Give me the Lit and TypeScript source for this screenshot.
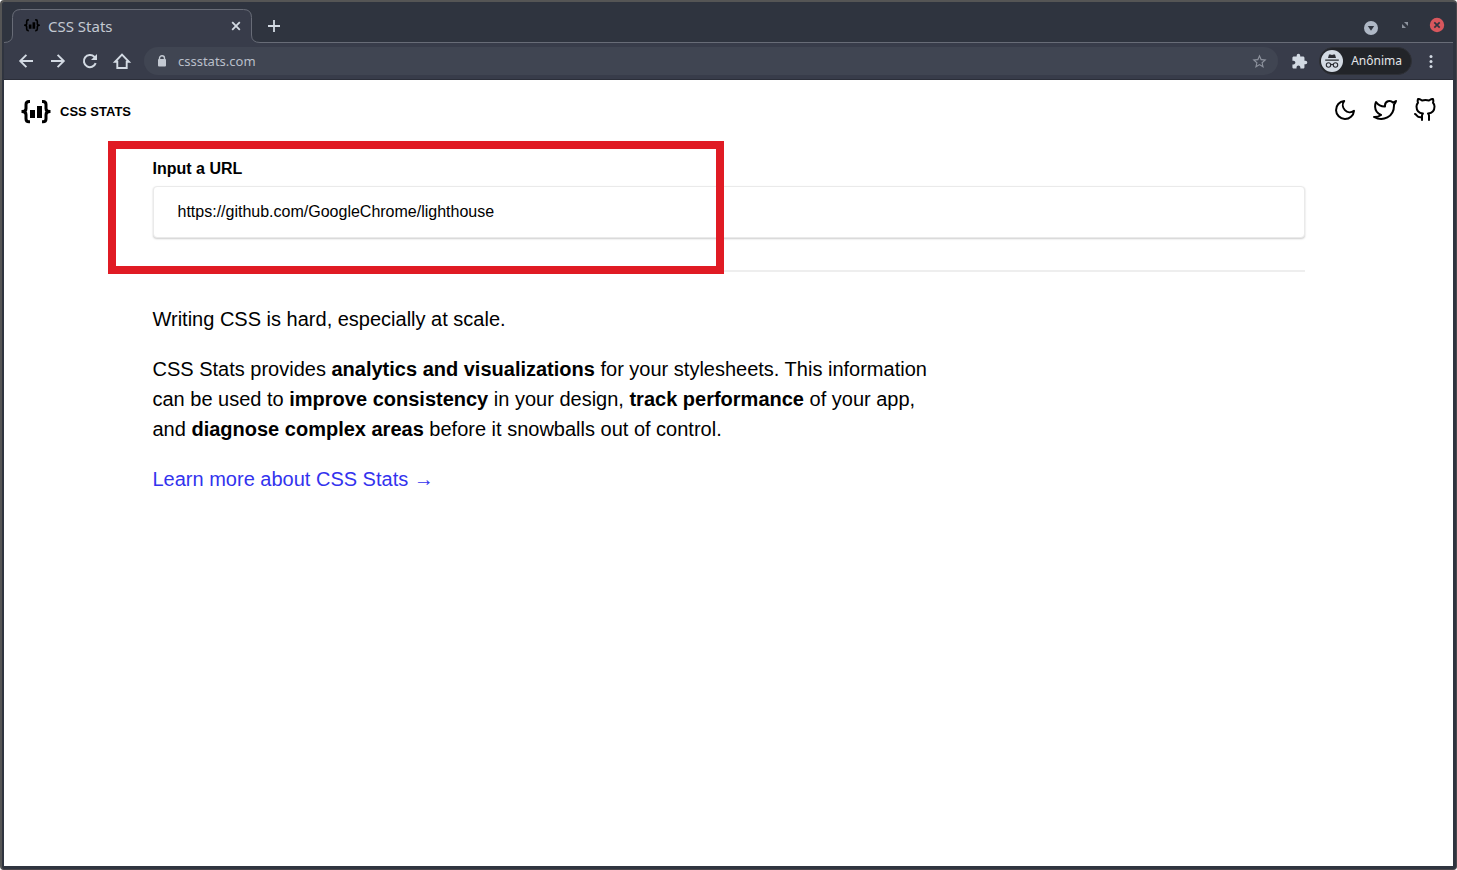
import { LitElement, html, css, svg } from "lit";
import { customElement } from "lit/decorators.js";

const statsLogo = svg`
  <g fill="none" stroke="currentColor" stroke-width="3">
    <path d="M9 1.500H8Q5 1.500 5 4.500V8.500Q5 11.600 1 11.600Q5 11.600 5 14.700V18.700Q5 21.700 8 21.700H9" />
    <path d="M21 1.500H22Q25 1.500 25 4.500V8.500Q25 11.600 29 11.600Q25 11.600 25 14.700V18.700Q25 21.700 22 21.700H21" />
    <path d="M.5 11.600H4M26 11.600H29.500" />
  </g>
  <path fill="currentColor" d="M9 10H14V18H9zM16 6H21V18H16z" />
`;

@customElement("browser-chrome")
class BrowserChrome extends LitElement {
  static styles = css`
    :host {
      display: block;
      color: #d3dae3;
      font-family: "Noto Sans", sans-serif;
    }
    * {
      box-sizing: border-box;
    }
    button {
      display: flex;
      align-items: center;
      justify-content: center;
      padding: 0;
      border: 0;
      background: none;
      color: inherit;
      font: inherit;
    }
    svg {
      display: block;
      flex: none;
    }
    .strip {
      display: flex;
      height: 41px;
      background: #2f343f;
    }
    .tab {
      position: relative;
      display: flex;
      align-items: center;
      width: 256px;
      padding: 6px 17px 0 20px;
    }
    .outline {
      position: absolute;
      left: 0;
      bottom: 0;
    }
    .favicon {
      position: relative;
      color: #000;
    }
    .title {
      position: relative;
      flex: 1;
      margin-left: 8px;
      color: #c3c9d2;
      font-size: 15px;
      line-height: 20px;
    }
    .close {
      position: relative;
      width: 14px;
      height: 14px;
    }
    .rest {
      flex: 1;
      display: flex;
      align-items: center;
      padding: 8px 8px 0 6px;
      border-bottom: 1px solid #686c77;
    }
    .controls {
      margin-left: auto;
      display: flex;
      align-items: flex-start;
      gap: 16px;
    }
    .controls .minimize {
      margin: 3px 2px 0 0;
    }
    .toolbar {
      display: flex;
      align-items: center;
      height: 37px;
      padding: 0 14px 0 12px;
      background: #383c4a;
      border-bottom: 1px solid #2b2e39;
    }
    .nav {
      display: flex;
      gap: 12px;
      margin-right: 12px;
    }
    .address {
      flex: 1;
      display: flex;
      align-items: center;
      height: 28px;
      padding: 0 10px 0 12px;
      border-radius: 14px;
      background: #404552;
    }
    .url {
      flex: 1;
      min-width: 0;
      margin-left: 10px;
      padding: 0;
      border: 0;
      outline: 0;
      background: none;
      color: #b9bfc9;
      font: 13px/18px "Noto Sans", sans-serif;
    }
    .star {
      color: #8d929d;
    }
    .extension {
      margin: 0 11px 0 13px;
    }
    .profile {
      gap: 8px;
      height: 28px;
      padding: 0 9px 0 1px;
      border: 1px solid #2e3036;
      border-radius: 14px;
      background: #222429;
      color: #e3e5e9;
      font-size: 12px;
      line-height: 18px;
    }
    .menu {
      margin-left: 11px;
    }
  `;

  render() {
    return html`
      <div class="strip">
        <div class="tab">
          <svg class="outline" width="256" height="34" viewBox="0 0 256 34">
            <path
              d="M0 33.500Q8.500 33.500 8.500 26V8.500Q8.500 .5 16.500 .5H239.500Q247.500 .5 247.500 8.500V26Q247.500 33.500 256 33.500V34H0z"
              fill="#383c4a"
            />
            <path
              d="M0 33.500Q8.500 33.500 8.500 26V8.500Q8.500 .5 16.500 .5H239.500Q247.500 .5 247.500 8.500V26Q247.500 33.500 256 33.500"
              fill="none"
              stroke="#686c77"
            />
          </svg>
          <svg class="favicon" width="16" height="13" viewBox="0 0 30 24">${statsLogo}</svg>
          <span class="title">CSS Stats</span>
          <button class="close" aria-label="Close tab">
            <svg width="14" height="14" viewBox="0 0 14 14" stroke="currentColor" stroke-width="1.800">
              <path d="M3.200 3.200L10.800 10.800M10.800 3.200L3.200 10.800" />
            </svg>
          </button>
        </div>
        <div class="rest">
          <button aria-label="New tab">
            <svg width="16" height="16" viewBox="0 0 16 16" stroke="currentColor" stroke-width="1.800">
              <path d="M8 2V14M2 8H14" />
            </svg>
          </button>
          <div class="controls">
            <button class="minimize" aria-label="Minimize">
              <svg width="16" height="16" viewBox="0 0 16 16">
                <circle cx="8" cy="8" r="7" fill="#afb8c6" />
                <path d="M4.800 6H11.200L8 10.700z" fill="#2f343f" />
              </svg>
            </button>
            <button aria-label="Restore">
              <svg width="16" height="16" viewBox="0 0 16 16" fill="#8c929d">
                <path d="M7 5H11V9zM5 7V11H9z" />
              </svg>
            </button>
            <button aria-label="Close window">
              <svg width="16" height="16" viewBox="0 0 16 16">
                <circle cx="8" cy="8" r="7.200" fill="#d8575d" />
                <path d="M5.300 5.300L10.700 10.700M10.700 5.300L5.300 10.700" stroke="#2f343f" stroke-width="1.700" />
              </svg>
            </button>
          </div>
        </div>
      </div>
      <div class="toolbar">
        <div class="nav">
          <button aria-label="Back">
            <svg width="20" height="20" viewBox="0 0 20 20" fill="none" stroke="currentColor" stroke-width="1.900">
              <path d="M17 10H4.500M10.400 3.800L4.200 10L10.400 16.200" />
            </svg>
          </button>
          <button aria-label="Forward">
            <svg width="20" height="20" viewBox="0 0 20 20" fill="none" stroke="currentColor" stroke-width="1.900">
              <path d="M3 10H15.500M9.600 3.800L15.800 10L9.600 16.200" />
            </svg>
          </button>
          <button aria-label="Reload">
            <svg width="20" height="20" viewBox="0 0 20 20" fill="none" stroke="currentColor" stroke-width="2">
              <path d="M15.700 12.200A6.100 6.100 0 1 1 14.300 5.700L16 7.400" />
              <path d="M17 3V9H11z" fill="currentColor" stroke="none" />
            </svg>
          </button>
          <button aria-label="Home">
            <svg width="20" height="20" viewBox="0 0 20 20" fill="none" stroke="currentColor" stroke-width="1.900">
              <path d="M4 10.800H5.300V17H14.700V10.800H16L17 10.800L10 3.500L3 10.800z" />
            </svg>
          </button>
        </div>
        <div class="address">
          <svg width="12" height="14" viewBox="0 0 12 14">
            <path d="M3.500 6V4.200a2.500 2.500 0 0 1 5 0V6" fill="none" stroke="#c3c9d2" stroke-width="1.400" />
            <rect x="2" y="5" width="8" height="7.500" rx="1" fill="#c3c9d2" />
          </svg>
          <input class="url" type="text" aria-label="Address" value="cssstats.com" />
          <button class="star" aria-label="Bookmark this page">
            <svg width="17" height="17" viewBox="0 0 24 24" fill="currentColor">
              <path
                d="M22 9.240l-7.190-.62L12 2 9.190 8.630 2 9.240l5.460 4.730L5.820 21 12 17.270 18.180 21l-1.630-7.030L22 9.240zM12 15.400l-3.760 2.270 1-4.280-3.320-2.880 4.380-.38L12 6.100l1.710 4.040 4.380.38-3.320 2.880 1 4.280L12 15.400z"
              />
            </svg>
          </button>
        </div>
        <button class="extension" aria-label="Extensions">
          <svg width="17" height="17" viewBox="0 0 24 24" fill="currentColor">
            <path
              d="M20.500 11H19V7c0-1.100-.9-2-2-2h-4V3.500a2.500 2.500 0 0 0-5 0V5H4c-1.100 0-1.990.9-1.990 2v3.800H3.500c1.490 0 2.700 1.210 2.700 2.700s-1.210 2.700-2.700 2.700H2V20c0 1.100.9 2 2 2h3.800v-1.500c0-1.490 1.210-2.700 2.700-2.700s2.700 1.210 2.700 2.700V22H17c1.100 0 2-.9 2-2v-4h1.500a2.500 2.500 0 0 0 0-5z"
            />
          </svg>
        </button>
        <button class="profile">
          <svg width="22" height="22" viewBox="0 0 22 22">
            <circle cx="11" cy="11" r="11" fill="#d3dae3" />
            <path d="M7 8L8 4.500H9.500L11 5L12.500 4.500H14L15 8zM4.200 9.500H17.800V10.700H4.200z" fill="#292b31" />
            <g fill="none" stroke="#292b31" stroke-width="1.100">
              <circle cx="7.500" cy="15" r="2.200" />
              <circle cx="14.500" cy="15" r="2.200" />
              <path d="M9.700 14.800Q11 14 12.300 14.800" />
            </g>
          </svg>
          Anônima
        </button>
        <button class="menu" aria-label="Menu">
          <svg width="16" height="16" viewBox="0 0 16 16" fill="currentColor">
            <circle cx="8" cy="3.500" r="1.500" />
            <circle cx="8" cy="8.500" r="1.500" />
            <circle cx="8" cy="13.500" r="1.500" />
          </svg>
        </button>
      </div>
    `;
  }
}

@customElement("stats-page")
class StatsPage extends LitElement {
  static styles = css`
    :host {
      display: block;
      background: #fff;
      color: #000;
      font-family: "Liberation Sans", Arial, sans-serif;
    }
    * {
      box-sizing: border-box;
    }
    svg {
      display: block;
    }
    .header {
      display: flex;
      align-items: flex-start;
      justify-content: space-between;
      padding: 18px 16px 0 17px;
    }
    .brand {
      display: flex;
      align-items: center;
      gap: 9px;
      color: inherit;
      font-size: 13px;
      font-weight: 700;
      line-height: 28px;
      text-decoration: none;
      text-transform: uppercase;
    }
    .links {
      display: flex;
      gap: 16px;
    }
    .icon {
      padding: 0;
      border: 0;
      background: none;
      color: inherit;
    }
    .main {
      position: relative;
      max-width: 1152px;
      margin: 31px auto 0;
    }
    .label {
      display: block;
      margin-bottom: 5px;
      font-size: 16px;
      font-weight: 700;
      line-height: 24px;
    }
    .field {
      display: block;
      width: 100%;
      height: 52px;
      padding: 0 24px;
      border: 1px solid #eaeaea;
      border-radius: 4px;
      outline: 0;
      background: #fff;
      box-shadow: 0 1px 2px rgba(0, 0, 0, 0.2);
      color: #000;
      font: 16px/24px "Liberation Sans", Arial, sans-serif;
    }
    .rule {
      height: 2px;
      margin: 32px 0;
      border: 0;
      background: #eee;
    }
    .intro {
      max-width: 784px;
      font-size: 20px;
      line-height: 30px;
    }
    .text {
      margin: 0 0 20px;
    }
    .more {
      color: #33e;
      text-decoration: none;
    }
    .highlight {
      position: absolute;
      top: -16px;
      left: -45px;
      width: 616px;
      height: 133px;
      border: 8px solid #e01b24;
      pointer-events: none;
    }
  `;

  render() {
    return html`
      <header class="header">
        <a class="brand" href="#">
          <svg width="30" height="24" viewBox="0 0 30 24">${statsLogo}</svg>
          CSS Stats
        </a>
        <nav class="links">
          <button class="icon" aria-label="Toggle dark mode">
            <svg width="24" height="24" viewBox="0 0 24 24" fill="none" stroke="currentColor" stroke-width="2" stroke-linecap="round" stroke-linejoin="round">
              <path d="M21 12.790A9 9 0 1 1 11.210 3 7 7 0 0 0 21 12.790z" />
            </svg>
          </button>
          <a class="icon" href="#" aria-label="Twitter">
            <svg width="24" height="24" viewBox="0 0 24 24" fill="none" stroke="currentColor" stroke-width="2" stroke-linecap="round" stroke-linejoin="round">
              <path d="M23 3a10.900 10.900 0 0 1-3.140 1.530 4.480 4.480 0 0 0-7.860 3v1A10.660 10.660 0 0 1 3 4s-4 9 5 13a11.640 11.640 0 0 1-7 2c9 5 20 0 20-11.500a4.500 4.500 0 0 0-.08-.83A7.720 7.720 0 0 0 23 3z" />
            </svg>
          </a>
          <a class="icon" href="#" aria-label="GitHub">
            <svg width="24" height="24" viewBox="0 0 24 24" fill="none" stroke="currentColor" stroke-width="2" stroke-linecap="round" stroke-linejoin="round">
              <path d="M9 19c-5 1.500-5-2.500-7-3m14 6v-3.870a3.370 3.370 0 0 0-.94-2.610c3.140-.35 6.440-1.540 6.440-7A5.440 5.440 0 0 0 20 4.770 5.070 5.070 0 0 0 19.910 1S18.730.65 16 2.480a13.380 13.380 0 0 0-7 0C6.270.65 5.090 1 5.090 1A5.070 5.070 0 0 0 5 4.770a5.440 5.440 0 0 0-1.500 3.780c0 5.420 3.300 6.610 6.440 7A3.370 3.370 0 0 0 9 18.130V22" />
            </svg>
          </a>
        </nav>
      </header>
      <main class="main">
        <label class="label" for="url">Input a URL</label>
        <input class="field" id="url" type="text" value="https://github.com/GoogleChrome/lighthouse" />
        <hr class="rule" />
        <div class="intro">
          <p class="text">Writing CSS is hard, especially at scale.</p>
          <p class="text">
            CSS Stats provides <strong>analytics and visualizations</strong> for your stylesheets. This information can be
            used to <strong>improve consistency</strong> in your design, <strong>track performance</strong> of your app, and
            <strong>diagnose complex areas</strong> before it snowballs out of control.
          </p>
          <p class="text"><a class="more" href="#">Learn more about CSS Stats →</a></p>
        </div>
        <div class="highlight"></div>
      </main>
    `;
  }
}

@customElement("app-root")
class AppRoot extends LitElement {
  static styles = css`
    :host {
      display: block;
      background: #fff;
    }
    .window {
      box-sizing: border-box;
      display: flex;
      flex-direction: column;
      min-height: 100vh;
      padding: 0 3px 3px 2px;
      border: 2px solid #555;
      border-width: 2px 1px 1px 2px;
      border-color: #555 #4a474c #4a474c #555;
      border-radius: 4px;
      background: #2f343f;
    }
    .page {
      flex: 1;
    }
  `;

  render() {
    return html`
      <div class="window">
        <browser-chrome></browser-chrome>
        <stats-page class="page"></stats-page>
      </div>
    `;
  }
}
